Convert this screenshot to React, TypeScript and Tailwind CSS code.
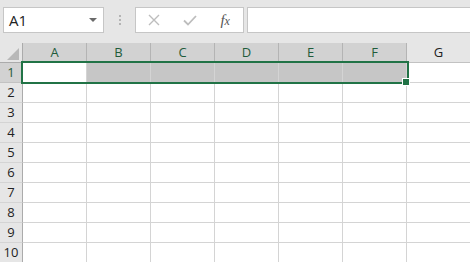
import React from 'react';

const cols = ['A', 'B', 'C', 'D', 'E', 'F', 'G'];
const rows = [1, 2, 3, 4, 5, 6, 7, 8, 9, 10];

const App = () => {
  return (
    <div className="w-[470px] h-[262px] overflow-hidden bg-white relative" style={{fontFamily: '"Open Sans", "Noto Sans", sans-serif'}}>

      {/* Formula bar */}
      <div className="h-[43px] bg-[#e6e6e6] flex items-start pt-[7px] pl-[3px]">
        <div className="w-[101px] h-[26px] bg-white border border-[#c6c6c6] flex items-center justify-between pl-[5px] pr-[6px]">
          <span className="text-[15px] text-[#222]">A1</span>
          <svg width="8" height="5" viewBox="0 0 8 5"><path d="M0 0h8L4 4z" fill="#6a6a6a"/></svg>
        </div>
        <div className="w-[31px] h-[26px] flex flex-col items-center justify-center gap-[2px]">
          <span className="w-[2px] h-[2px] bg-[#b4b4b4]"/>
          <span className="w-[2px] h-[2px] bg-[#b4b4b4]"/>
          <span className="w-[2px] h-[2px] bg-[#b4b4b4]"/>
        </div>
        <div className="w-[109px] h-[26px] bg-white border border-[#c6c6c6] flex items-center">
          <div className="w-[36px] flex justify-center">
            <svg width="12" height="12" viewBox="0 0 12 12"><path d="M1 1l10 10M11 1L1 11" stroke="#bdbdbd" strokeWidth="1.4"/></svg>
          </div>
          <div className="w-[36px] flex justify-center">
            <svg width="14" height="11" viewBox="0 0 14 11"><path d="M1 5.5l4 4L13 1" stroke="#bdbdbd" strokeWidth="1.8" fill="none"/></svg>
          </div>
          <div className="w-[36px] flex justify-center">
            <span className="italic text-[15px] text-[#555] leading-none" style={{fontFamily: '"Liberation Serif", serif'}}>f<span className="text-[12px]">x</span></span>
          </div>
        </div>
        <div className="ml-[3px] flex-1 h-[26px] bg-white border border-[#c6c6c6] border-r-0"/>
      </div>

      {/* Grid */}
      <div className="grid grid-cols-[23px_repeat(7,64px)] grid-rows-[20px_repeat(10,20px)] text-[13px]">
        <div className="bg-[#e6e6e6] border-r border-b border-[#ababab] relative">
          <svg className="absolute left-[7px] top-[5px]" width="12" height="12" viewBox="0 0 12 12"><path d="M12 0V12H0z" fill="#b8b8b8"/></svg>
        </div>
        {cols.map((c) => {
          const sel = c !== 'G';
          return (
            <div key={c} className={`border-r border-b flex items-center justify-center ${sel ? 'bg-[#d2d2d2] text-[#1f5c3b] border-[#b4b4b4]' : 'bg-[#e6e6e6] text-[#222] border-[#c2c2c2]'}`}>
              {c}
            </div>
          );
        })}
        {rows.map((r) => (
          <React.Fragment key={r}>
            <div className={`border-r border-b border-[#ababab] flex items-center justify-center ${r === 1 ? 'bg-[#d2d2d2] text-[#1f5c3b] border-b-[#c2c2c2]' : 'bg-[#e6e6e6] text-[#222] border-b-[#d4d4d4]'}`}>
              {r}
            </div>
            {cols.map((c) => (
              <div key={c} className={`border-r border-b border-[#d4d4d4] ${r === 1 && c !== 'A' && c !== 'G' ? 'bg-[#c6c6c6]' : 'bg-white'}`}/>
            ))}
          </React.Fragment>
        ))}
      </div>

      {/* Selection A1:F1 */}
      <div className="absolute left-[21px] top-[61px] w-[388px] h-[23px] border-[2px] border-[#217346] pointer-events-none">
        <div className="w-[63px] h-full bg-white"/>
      </div>
      <div className="absolute left-[402px] top-[78px] w-[8px] h-[8px] bg-[#217346] border border-white"/>
    </div>
  );
};

export default App;
